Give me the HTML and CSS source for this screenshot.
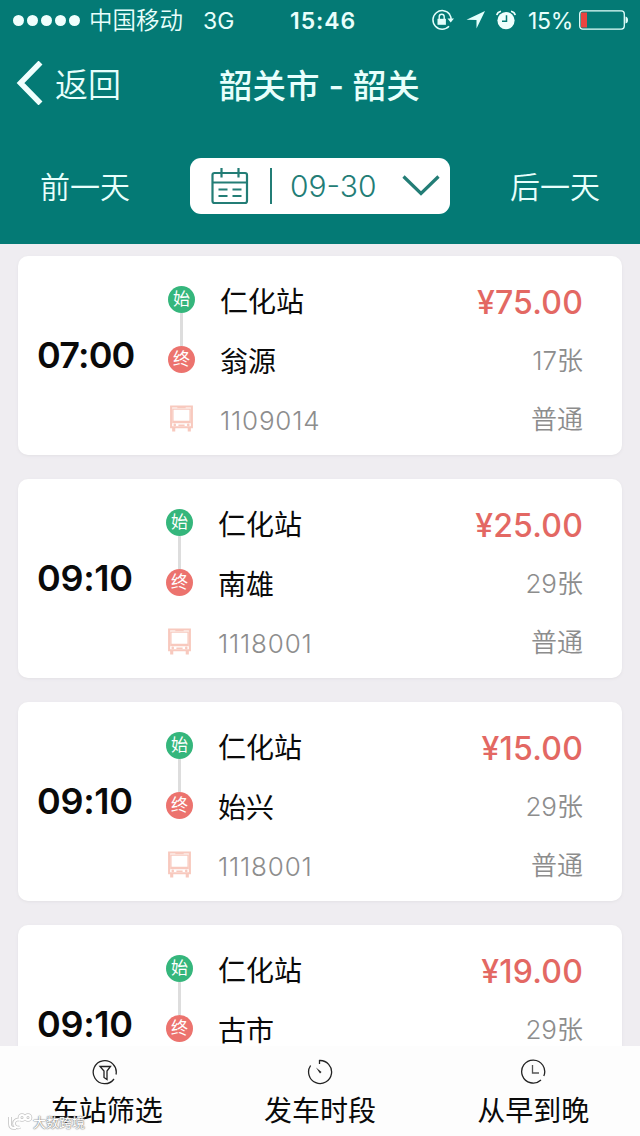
FILE: index.html
```html
<!DOCTYPE html>
<html lang="zh-CN">
<head>
<meta charset="utf-8">
<title>韶关市 - 韶关</title>
<link rel="stylesheet" href="styles.css">
</head>
<body>
<svg class="defs" aria-hidden="true">
  <symbol id="bus" viewBox="0 0 24 26">
    <path d="M2 1.500h20v20H2z" fill="none" stroke="currentColor" stroke-width="2"/>
    <path d="M3.700 4h16.600v11.800H3.700z" fill="none" stroke="currentColor" stroke-width="1.300"/>
    <path d="M8 2.500h8M3 16.800h18M9 19.500h6" stroke="currentColor" stroke-width="1.400"/>
    <circle cx="5.500" cy="19.200" r="1.300" fill="currentColor"/><circle cx="18.500" cy="19.200" r="1.300" fill="currentColor"/>
    <path d="M4.500 22v3.500M19.500 22v3.500" stroke="currentColor" stroke-width="3"/>
  </symbol>
</svg>
<div class="app">
  <header class="header">
    <div class="status">
      <div class="signal"><i></i><i></i><i></i><i></i><i></i></div>
      <span class="carrier">中国移动</span>
      <span class="network">3G</span>
      <span class="clock">15:46</span>
      <svg class="lock" width="24" height="22" viewBox="0 0 24 22"><path d="M19.800 5.500A9.300 9.300 0 1 0 19 17.300M19.400 5.200Q21.300 8 21.200 11" fill="none" stroke="#e4fffc" stroke-width="1.500"/><path d="M17.500 9.600h6.500l-3.300 4z" fill="#e4fffc"/><path d="M7.500 9.800h8.400v6H7.500z" fill="#e4fffc"/><path d="M9.200 10V7.800a2.500 2.500 0 0 1 5 0V10" fill="none" stroke="#e4fffc" stroke-width="1.400"/></svg>
      <svg class="arrow" width="20" height="20" viewBox="0 0 20 20"><path d="M19 1L10.500 18.500V10L.5 9.700z" fill="#e4fffc"/></svg>
      <svg class="alarm" width="20" height="20" viewBox="0 0 20 20"><circle cx="10" cy="10.600" r="8.600" fill="#f0fffd"/><path d="M.8 5.200Q1.300 2 5 1.200M19.200 5.200Q18.700 2 15 1.200" fill="none" stroke="#f0fffd" stroke-width="1.600"/><path d="M10.500 5.200v6H6" fill="none" stroke="#047a74" stroke-width="1.500"/></svg>
      <span class="percent">15%</span>
      <svg class="battery" width="50" height="20" viewBox="0 0 50 20"><rect x=".7" y=".9" width="44.600" height="18.200" rx="3" fill="none" stroke="#e4fffc" stroke-width="1.300"/><path d="M2 2.500h6v15H2z" fill="#ea4440"/><path d="M46.500 6.500q2.500.5 2.500 3.500t-2.500 3.500z" fill="#e4fffc"/></svg>
    </div>
    <nav class="nav">
      <a class="back"><svg width="27" height="44" viewBox="0 0 27 44"><path d="M24.500 1.500L4.500 22l20 20.500" fill="none" stroke="#f0fffd" stroke-width="5.500"/></svg><span>返回</span></a>
      <h1 class="title">韶关市 - 韶关</h1>
    </nav>
    <div class="days">
      <span class="day">前一天</span>
      <div class="picker">
        <svg class="calendar" width="38" height="38" viewBox="0 0 38 38"><g fill="none" stroke="#237d76" stroke-width="2.200"><rect x="1.500" y="6" width="34.500" height="30" rx="2"/><path d="M2 15.500h34M10.500 1v9.500M27.500 1v9.500M7.500 22.500h9M21.500 22.500h9M7.500 29h9M21.500 29h9"/></g></svg>
        <span class="divider"></span>
        <span class="date">09-30</span>
        <svg class="chevron" width="38" height="22" viewBox="0 0 38 22"><path d="M1.500 1.500L19 18.500l17.500-17" fill="none" stroke="#237d76" stroke-width="3.200"/></svg>
      </div>
      <span class="day">后一天</span>
    </div>
  </header>

  <main class="list">
    <article class="trip trip-first">
      <time class="depart">07:00</time>
      <div class="route"><span class="dot start">始</span><span class="line"></span><span class="dot end">终</span><svg class="bus"><use href="#bus"/></svg></div>
      <div class="stops"><span>仁化站</span><span>翁源</span><span class="code">1109014</span></div>
      <div class="fare"><b>¥75.00</b><span>17张</span><span>普通</span></div>
    </article>
    <article class="trip">
      <time class="depart">09:10</time>
      <div class="route"><span class="dot start">始</span><span class="line"></span><span class="dot end">终</span><svg class="bus"><use href="#bus"/></svg></div>
      <div class="stops"><span>仁化站</span><span>南雄</span><span class="code">1118001</span></div>
      <div class="fare"><b>¥25.00</b><span>29张</span><span>普通</span></div>
    </article>
    <article class="trip">
      <time class="depart">09:10</time>
      <div class="route"><span class="dot start">始</span><span class="line"></span><span class="dot end">终</span><svg class="bus"><use href="#bus"/></svg></div>
      <div class="stops"><span>仁化站</span><span>始兴</span><span class="code">1118001</span></div>
      <div class="fare"><b>¥15.00</b><span>29张</span><span>普通</span></div>
    </article>
    <article class="trip">
      <time class="depart">09:10</time>
      <div class="route"><span class="dot start">始</span><span class="line"></span><span class="dot end">终</span></div>
      <div class="stops"><span>仁化站</span><span>古市</span></div>
      <div class="fare"><b>¥19.00</b><span>29张</span></div>
    </article>
  </main>

  <footer class="tabs">
    <a class="tab"><svg width="26" height="26" viewBox="0 0 26 26"><g fill="none" stroke="#222" stroke-width="1.300"><path d="M22 20A11.500 11.500 0 1 1 24 15.500"/><path d="M8 7.500h10.500l-3.500 4.500v8.500l-3-2v-6.500z"/></g></svg><span>车站筛选</span></a>
    <a class="tab"><svg width="26" height="26" viewBox="0 0 26 26"><path d="M12.500 5V1.500A11.500 11.500 0 1 1 3.600 6.500" fill="none" stroke="#222" stroke-width="1.300"/><path d="M9 8.500l5.500 4.500-1.500 1.500z" fill="#222"/></svg><span>发车时段</span></a>
    <a class="tab"><svg width="26" height="26" viewBox="0 0 26 26"><g fill="none" stroke="#222" stroke-width="1.300"><path d="M21 21A11.500 11.500 0 1 1 23.800 17"/><path d="M12.500 6v8H19" stroke="#555"/></g></svg><span>从早到晚</span></a>
  </footer>
  <div class="watermark"><svg width="26" height="18" viewBox="0 0 26 18"><g fill="none" stroke="#c4c4c4" stroke-width="3.600"><path d="M3 4v7q0 4 4 4h2M13 7a4 4 0 1 0 0 7"/><circle cx="15" cy="4.500" r="2.500"/><circle cx="21" cy="4.500" r="2.500"/></g><g fill="none" stroke="#fff" stroke-width="2"><path d="M3 4v7q0 4 4 4h2M13 7a4 4 0 1 0 0 7"/><circle cx="15" cy="4.500" r="2.500"/><circle cx="21" cy="4.500" r="2.500"/></g></svg><span>大数跨境</span></div>
</div>
</body>
</html>
```

FILE: styles.css
```css
* { box-sizing: border-box; }
body { margin: 0; font-family: Inter, "Noto Sans CJK SC", sans-serif; color: #0a0a0a; }
svg { display: block; flex: none; }
.defs { width: 0; height: 0; position: absolute; }
.app { width: 640px; height: 1136px; overflow: hidden; position: relative; display: flex; flex-direction: column; background: #efedf1; }
.app span, .app b, .app time, .title { white-space: nowrap; }

.header { height: 244px; flex: none; background: #047a75; color: #e8fffc; }
.status { height: 40px; display: flex; align-items: center; padding-left: 13px; font-size: 23px; line-height: 40px; }
.signal { display: flex; gap: 3px; width: 76px; }
.signal i { width: 11px; height: 11px; border-radius: 50%; background: #f0fffd; }
.carrier { width: 114px; padding-top: 2px; font-size: 23.5px; font-weight: 350; }
.network { width: 87px; padding-top: 1px; }
.clock { width: 140px; padding-top: 1px; font-weight: 600; letter-spacing: .9px; }
.lock { margin-right: 12px; }
.arrow { margin-right: 10px; }
.alarm { margin-right: 12px; }
.percent { width: 51px; padding-top: 1px; letter-spacing: -.3px; }
.nav { height: 86px; display: flex; align-items: center; padding-left: 16px; }
.back { width: 203px; display: flex; align-items: center; gap: 12px; font-size: 33px; font-weight: 350; }
.title { margin: 0; font-size: 33.5px; font-weight: 500; }
.days { height: 116px; margin-top: 2px; display: flex; align-items: center; justify-content: space-between; padding: 0 40px; }
.day { font-size: 30px; font-weight: 350; padding-bottom: 2px; }
.picker { width: 260px; height: 56px; border-radius: 11px; background: #fff; color: #237d76; display: flex; align-items: center; padding-left: 21px; }
.divider { width: 2px; height: 36px; margin: 0 18px 0 21px; background: #237d76; }
.date { width: 112px; font-size: 30px; font-weight: 350; }

.list { flex: 1; min-height: 0; overflow: hidden; padding: 12px 18px 0; display: flex; flex-direction: column; gap: 24px; }
.trip { flex: none; height: 199px; border-radius: 10px; background: #fff; display: grid; grid-template-columns: 129px 52px 1fr auto; padding: 17px 39px 0 19px; box-shadow: 0 1px 3px #e3e1e5; }
.trip-first { grid-template-columns: 131px 52px 1fr auto; }
.depart { font-size: 36px; font-weight: 600; line-height: 165px; letter-spacing: -.3px; }
.trip-first .depart { letter-spacing: -.8px; }
.route { display: flex; flex-direction: column; align-items: center; width: 27px; padding-top: 13px; }
.dot { width: 27px; height: 27px; border-radius: 50%; color: #fff; font-size: 17px; line-height: 26px; text-align: center; }
.start { background: #35b67c; }
.end { background: #ec736e; }
.line { width: 3px; height: 33px; background: #ddd; }
.bus { width: 25px; height: 27px; margin-top: 32px; color: #f8c9be; }
.stops, .fare { display: grid; grid-template-rows: 60px 59px 59px; line-height: 59px; font-size: 28px; }
.stops .code { font-size: 26px; line-height: 57px; font-weight: 350; color: #8d8d8d; letter-spacing: .8px; }
.fare { grid-template-rows: 59px 59px 59px; justify-items: end; font-size: 26px; color: #8d8d8d; font-weight: 350; }
.fare span { line-height: 58px; }
.fare b { font-size: 32px; font-weight: 550; line-height: 60px; color: #e36863; letter-spacing: .2px; }

.tabs { height: 90px; flex: none; background: #fdfdfd; display: grid; grid-template-columns: repeat(3, 1fr); padding-top: 13px; }
.tab { display: flex; flex-direction: column; align-items: center; font-size: 28px; line-height: 52px; }
.tab:first-child svg { margin-right: 3px; }
.watermark { position: absolute; left: 7px; bottom: 5px; display: flex; align-items: center; font-size: 13px; line-height: 18px; color: #fff; text-shadow: 0 0 1px #888, 0 0 1px #888, 0 0 2px #888; }
```
